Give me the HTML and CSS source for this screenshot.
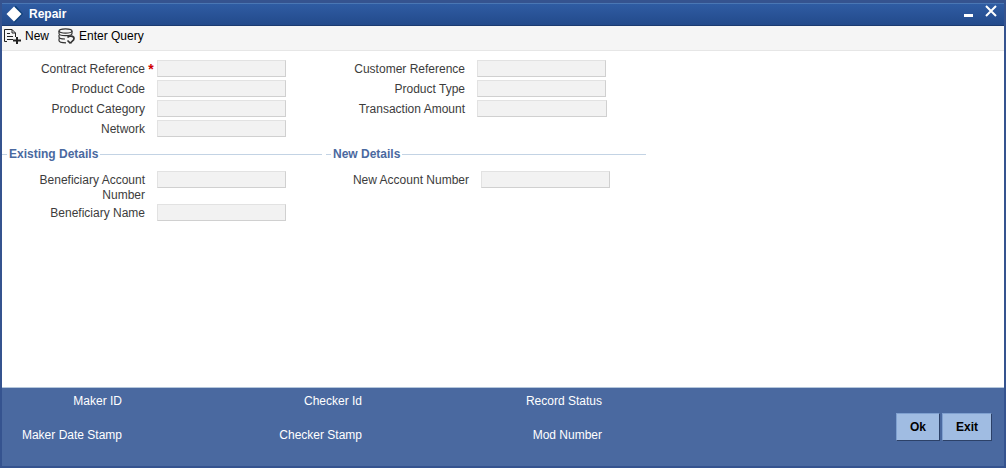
FILE: index.html
```html
<!DOCTYPE html>
<html lang="en">
<head>
    <meta charset="UTF-8">
    <meta name="viewport" content="width=device-width, initial-scale=1.0">
    <title>Repair</title>
    <link rel="stylesheet" href="styles.css">
</head>
<body>

<div class="window">
    <!-- Title bar -->
    <header class="titlebar">
        <svg class="logo" width="18" height="18" viewBox="0 0 18 18">
            <path d="M10 0h1l7 8-8 8.500H9z" fill="#0c3f78"/>
            <path d="M9 .5l7.500 7.500L9 15.500 1.500 8z" fill="#fff"/>
        </svg>
        <h1 class="title">Repair</h1>
        <button class="window-button" type="button" aria-label="Minimize">
            <svg width="12" height="12" viewBox="0 0 12 12"><path d="M2 9h9v3H2z" fill="#fff"/></svg>
        </button>
        <button class="window-button" type="button" aria-label="Close">
            <svg width="12" height="12" viewBox="0 0 12 12"><path d="M1 1l10 10M11 1L1 11" stroke="#fff" stroke-width="2"/></svg>
        </button>
    </header>

    <!-- Toolbar -->
    <nav class="toolbar">
        <button class="tool" type="button">
            <svg width="18" height="16" viewBox="0 0 18 16" fill="none" stroke="#222">
                <path d="M3 13.500H.5V1.500H8l3.500 3.500V9M8 1.500V5h3.500"/>
                <path d="M3 5.500h3M3 8.500h6M3 11.500h6"/>
                <path d="M9 12.500h8M13 9v7" stroke-width="2"/>
            </svg>
            New
        </button>
        <button class="tool" type="button">
            <svg width="18" height="16" viewBox="0 0 18 16" fill="none" stroke="#333" stroke-width="1.200">
                <ellipse cx="7.500" cy="3" rx="6.500" ry="2.200"/>
                <path d="M1 3v2.500c0 1.500 3 2.200 6.500 2.200S14 7 14 5.500V3"/>
                <path d="M1 7v2c0 1.300 2.500 2 6 2M1 10.500v2c0 1.500 2.500 2.300 7 2.300"/>
                <path d="M9.500 9.500c1-1.800 6.500-2 6.500 1 0 2.500-3 2.500-3.500 5M9.500 12.500l3 2.800" stroke-width="1.700"/>
            </svg>
            Enter Query
        </button>
    </nav>

    <form class="content" id="repair">
        <div class="columns">
            <div class="column">
                <div class="field">
                    <label for="contractRef">Contract Reference</label>
                    <span class="required">*</span>
                    <input type="text" id="contractRef" disabled>
                </div>
                <div class="field">
                    <label for="productCode">Product Code</label>
                    <input type="text" id="productCode" disabled>
                </div>
                <div class="field">
                    <label for="productCategory">Product Category</label>
                    <input type="text" id="productCategory" disabled>
                </div>
                <div class="field">
                    <label for="network">Network</label>
                    <input type="text" id="network" disabled>
                </div>
            </div>
            <div class="column">
                <div class="field">
                    <label for="customerRef">Customer Reference</label>
                    <input type="text" id="customerRef" disabled>
                </div>
                <div class="field">
                    <label for="productType">Product Type</label>
                    <input type="text" id="productType" disabled>
                </div>
                <div class="field">
                    <label for="amount">Transaction Amount</label>
                    <input type="text" class="amount" id="amount" disabled>
                </div>
            </div>
        </div>

        <div class="columns sections">
            <fieldset class="column">
                <legend>Existing Details</legend>
                <div class="field">
                    <label for="benAccount">Beneficiary Account Number</label>
                    <input type="text" id="benAccount" disabled>
                </div>
                <div class="field">
                    <label for="benName">Beneficiary Name</label>
                    <input type="text" id="benName" disabled>
                </div>
            </fieldset>
            <fieldset class="column">
                <legend>New Details</legend>
                <div class="field">
                    <label for="newAccount">New Account Number</label>
                    <input type="text" id="newAccount" disabled>
                </div>
            </fieldset>
        </div>
    </form>

    <!-- Audit details and buttons -->
    <footer class="footer">
        <div class="audit">
            <span>Maker ID</span>
            <span>Checker Id</span>
            <span>Record Status</span>
            <span>Maker Date Stamp</span>
            <span>Checker Stamp</span>
            <span>Mod Number</span>
        </div>
        <div class="actions">
            <button class="button" type="submit" form="repair">Ok</button>
            <button class="button" type="button">Exit</button>
        </div>
    </footer>
</div>

</body>
</html>
```
FILE: styles.css
```css
* {
    box-sizing: border-box;
}

body {
    margin: 0;
    font-family: "Liberation Sans", Arial, sans-serif;
    font-size: 12px;
    line-height: 15px;
    color: #3c3c3c;
}

button,
input {
    font: inherit;
}

.window {
    display: flex;
    flex-direction: column;
    min-height: 100vh;
    border: 2px solid #35538f;
    border-top-width: 3px;
    background-color: #fff;
}

/* Title bar */
.titlebar {
    display: flex;
    align-items: center;
    height: 23px;
    padding: 0 7px 0 3px;
    border-top: 1px solid #4a77b4;
    border-bottom: 1px solid #1b3a70;
    background: linear-gradient(#2f5ca3, #234a8b);
    color: #fff;
}

.title {
    flex: 1;
    margin: 0 0 0 6px;
    font-size: 12px;
    font-weight: bold;
}

.window-button {
    width: 12px;
    height: 12px;
    margin: 0 0 8px 11px;
    padding: 0;
    border: none;
    background: none;
    cursor: pointer;
}

.window-button svg {
    display: block;
}

/* Toolbar */
.toolbar {
    display: flex;
    gap: 9px;
    height: 25px;
    padding: 0 2px 4px;
    border-bottom: 1px solid #e6e6e6;
    background-color: #f5f5f5;
}

.tool {
    display: flex;
    align-items: center;
    gap: 3px;
    padding: 0;
    border: none;
    background: none;
    color: #000;
    cursor: pointer;
}

/* Form */
.content {
    flex: 1;
    padding-top: 8px;
}

.columns {
    display: flex;
}

.column {
    width: 320px;
}

.field {
    display: flex;
    align-items: flex-start;
    min-height: 20px;
    padding-top: 1px;
}

.field label {
    width: 143px;
    padding: 2px 0 0 20px;
    text-align: right;
}

.field input {
    width: 129px;
    height: 17px;
    margin-left: 12px;
    padding: 0 2px;
    border: 1px solid #e2e2e2;
    border-right-color: #d0d0d0;
    border-bottom-color: #d0d0d0;
    background-color: #f2f2f2;
}

.field input.amount {
    width: 130px;
}

.required {
    width: 12px;
    padding-top: 2px;
    text-align: center;
    font-size: 14px;
    font-weight: bold;
    color: #d00000;
}

.required + input {
    margin-left: 0;
}

.sections {
    gap: 4px;
    margin-top: 8px;
}

fieldset {
    min-width: 0;
    margin: 0;
    padding: 8px 0 0;
    border: none;
    border-top: 1px solid #c3d3e4;
}

legend {
    margin-left: 5px;
    padding: 0 2px;
    font-weight: bold;
    color: #4a69a0;
}

/* Footer */
.footer {
    display: flex;
    justify-content: space-between;
    height: 79px;
    padding-right: 12px;
    border-top: 1px solid #b5c7dc;
    background-color: #4a69a0;
    color: #fff;
}

.audit {
    display: grid;
    grid-template-columns: repeat(3, 240px);
    grid-auto-rows: 15px;
    row-gap: 19px;
    padding-top: 6px;
}

.audit span {
    width: 120px;
    text-align: right;
}

.actions {
    display: flex;
    align-items: flex-start;
    gap: 2px;
    padding-top: 25px;
}

.button {
    height: 28px;
    padding: 0 13px;
    border: 1px solid #7fa0d0;
    border-right-color: #2c4168;
    border-bottom-color: #2c4168;
    background-color: #a0bce2;
    font-weight: bold;
    color: #000;
    cursor: pointer;
}
```
